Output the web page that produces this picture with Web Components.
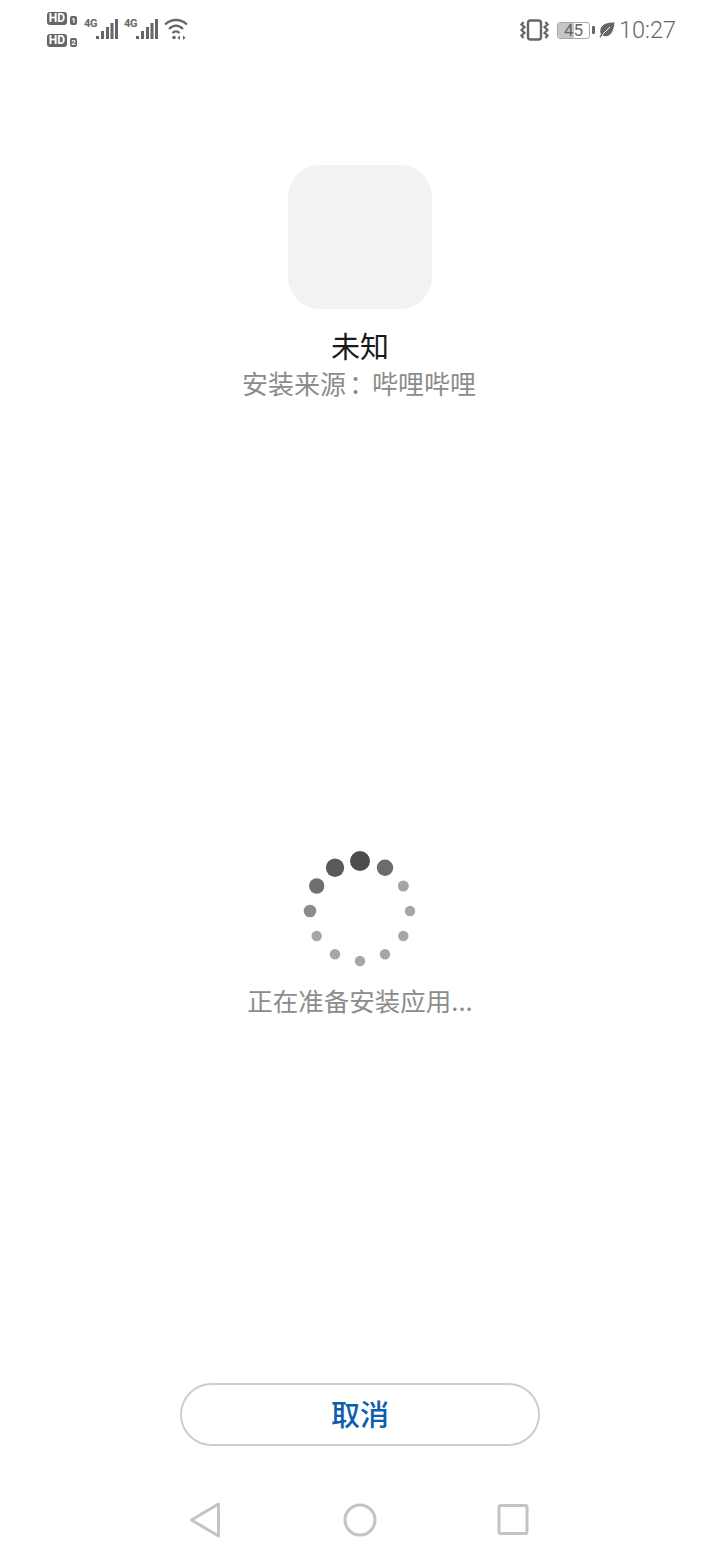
<!DOCTYPE html>
<html lang="zh-CN">
<head>
<meta charset="utf-8">
<title>安装</title>
<style>
    html, body { margin: 0; padding: 0; background: #fff; }
    body { font-family: "Noto Sans CJK SC", Roboto, sans-serif; }
</style>
</head>
<body>
<install-page>
    <status-bar slot="status"></status-bar>
    <app-summary slot="summary" name="未知" label="安装来源" source="哔哩哔哩"></app-summary>
    <install-spinner slot="progress" label="正在准备安装应用..."></install-spinner>
    <cancel-button slot="action">取消</cancel-button>
    <nav-bar slot="nav"></nav-bar>
</install-page>

<script>
class InstallPage extends HTMLElement {
    constructor() {
        super();
        this.attachShadow({ mode: 'open' });
        this.shadowRoot.innerHTML = `
            <style>
                :host { display: flex; flex-direction: column; width: 720px; height: 1560px; background: #fff; overflow: hidden; }
                .summary { margin-top: 105px; }
                .progress { margin-top: 451px; }
                .action { margin-top: auto; }
            </style>
            <slot name="status"></slot>
            <div class="summary"><slot name="summary"></slot></div>
            <div class="progress"><slot name="progress"></slot></div>
            <div class="action"><slot name="action"></slot></div>
            <slot name="nav"></slot>
        `;
    }
}

class StatusBar extends HTMLElement {
    constructor() {
        super();
        this.attachShadow({ mode: 'open' });
        const signal = `
            <svg class="signal" width="23" height="22" viewBox="0 0 23 22" fill="#666">
                <rect x="0" y="18" width="3" height="3"/>
                <rect x="5" y="13" width="3" height="8"/>
                <rect x="10" y="9" width="3" height="12"/>
                <rect x="14.500" y="5" width="3" height="16"/>
                <rect x="19" y="1" width="3" height="20"/>
            </svg>`;
        this.shadowRoot.innerHTML = `
            <style>
                :host { display: flex; justify-content: space-between; align-items: flex-start; height: 60px; padding: 0 45px 0 47px; box-sizing: border-box; color: #666; font-family: Roboto, sans-serif; }
                .left, .right { display: flex; }
                .left { padding-top: 11px; }
                .sims { display: flex; flex-direction: column; gap: 9px; padding-top: 1px; margin-right: 7px; width: 30px; }
                .sim { display: flex; align-items: flex-end; gap: 3px; height: 13px; }
                .hd { width: 20px; height: 13px; border-radius: 3px; background: #666; color: #fff; font: 700 12px/13px Roboto, sans-serif; text-align: center; }
                .num { width: 7px; height: 9px; border-radius: 2px; background: #666; color: #fff; font: 700 8px/9px Roboto, sans-serif; text-align: center; }
                .net { display: flex; width: 40px; height: 32px; }
                .g { font: 700 11px/12px Roboto, sans-serif; margin-top: 7px; width: 13px; flex: none; letter-spacing: -.2px; }
                .signal { margin: 7px 0 0 -1px; flex: none; }
                .wifi { margin: 7px 0 0 -1px; }
                .right { align-items: center; height: 60px; }
                .vib { margin-right: 8px; }
                .batt { position: relative; width: 33px; height: 17px; border: 1.5px solid #aaa; border-radius: 3px; box-sizing: border-box; font: 400 17px/14px Roboto, sans-serif; text-align: center; color: #666; margin-right: 2px; }
                .batt i { position: absolute; inset: 0 50% 0 0; background: #c6c6c6; border-radius: 2px 0 0 2px; }
                .batt span { position: relative; }
                .nub { width: 3px; height: 8px; background: #666; margin-right: 4px; border-radius: 1px; }
                .leaf { margin-right: 4px; }
                .time { font: 300 23.500px/60px Roboto, sans-serif; color: #666; width: 56px; }
            </style>
            <div class="left">
                <div class="sims">
                    <div class="sim"><span class="hd">HD</span><span class="num">1</span></div>
                    <div class="sim"><span class="hd">HD</span><span class="num">2</span></div>
                </div>
                <div class="net"><span class="g">4G</span>${signal}</div>
                <div class="net"><span class="g">4G</span>${signal}</div>
                <svg class="wifi" width="26" height="24" viewBox="0 0 26 24" fill="none" stroke="#666" stroke-width="2.300">
                    <path d="M2 6.500 C8.500 .5 17.500 .5 24 6.500"/>
                    <path d="M6 11 C10.500 6.500 15.500 6.500 20 11"/>
                    <path d="M9.500 15 C11.500 13 14.500 13 16.500 15"/>
                    <circle cx="11" cy="19.500" r="1.800" fill="#666" stroke="none"/>
                    <path d="M17 17.500 L14.500 19.800 L17 22 Z M20 17.500 L22.500 19.800 L20 22 Z" fill="#666" stroke="none"/>
                </svg>
            </div>
            <div class="right">
                <svg class="vib" width="29" height="22" viewBox="0 0 29 22" fill="none" stroke="#666">
                    <rect x="8" y="1.500" width="13" height="19" rx="2.500" stroke-width="2.400"/>
                    <path d="M3.500 3 L1.500 5.500 L4.500 8 L1.500 11 L4.500 14 L1.500 16.500 L3.500 19" stroke-width="2.200"/>
                    <path d="M25.500 3 L27.500 5.500 L24.500 8 L27.500 11 L24.500 14 L27.500 16.500 L25.500 19" stroke-width="2.200"/>
                </svg>
                <div class="batt"><i></i><span>45</span></div>
                <div class="nub"></div>
                <svg class="leaf" width="16" height="16" viewBox="0 0 16 16" fill="#666">
                    <path d="M15.500 .5 C9 .5 2.500 1.500 1.300 8 C1 9.800 1.500 11 2 12 L.5 15 L1.800 15.600 L3.200 13 C5 14.500 8 14.800 10.500 13 C14 10.500 15 5 15.500 .5 Z"/>
                    <path d="M3.500 12.500 L11 5" stroke="#fff" stroke-width="1" fill="none"/>
                </svg>
                <span class="time">10:27</span>
            </div>
        `;
    }
}

class AppSummary extends HTMLElement {
    constructor() {
        super();
        this.attachShadow({ mode: 'open' });
    }

    connectedCallback() {
        this.shadowRoot.innerHTML = `
            <style>
                :host { display: flex; flex-direction: column; align-items: center; font-family: "Noto Sans CJK SC", sans-serif; }
                .icon { width: 144px; height: 144px; border-radius: 32px; background: #f2f2f2; }
                .name { margin-top: 18px; font-size: 29px; line-height: 36px; color: #1a1a1a; }
                .source { margin-top: 3px; padding-right: 2px; font-size: 26px; line-height: 34px; color: #8c8c8c; }
                .colon { display: inline-block; transform: translateX(3px); }
            </style>
            <div class="icon"></div>
            <div class="name">${this.getAttribute('name')}</div>
            <div class="source">${this.getAttribute('label')}<span class="colon">：</span>${this.getAttribute('source')}</div>
        `;
    }
}

class InstallSpinner extends HTMLElement {
    constructor() {
        super();
        this.attachShadow({ mode: 'open' });
    }

    connectedCallback() {
        // clockwise from 12 o'clock: radius and shade fade out along the tail
        const dots = [
            [10, '#4d4d4d'], [8.2, '#6c6c6c'], [5.5, '#a6a6a6'], [5.2, '#a6a6a6'],
            [5.2, '#a6a6a6'], [5.2, '#a6a6a6'], [5.2, '#a6a6a6'], [5.2, '#a6a6a6'],
            [5.2, '#a6a6a6'], [6.3, '#8c8c8c'], [7.7, '#707070'], [9.2, '#5a5a5a']
        ];
        const circles = dots.map(([r, fill], i) => {
            const a = i * Math.PI / 6;
            const x = (60 + 50 * Math.sin(a)).toFixed(2);
            const y = (60 - 50 * Math.cos(a)).toFixed(2);
            return `<circle cx="${x}" cy="${y}" r="${r}" fill="${fill}"/>`;
        }).join('');
        this.shadowRoot.innerHTML = `
            <style>
                :host { display: flex; flex-direction: column; align-items: center; font-family: "Noto Sans CJK SC", sans-serif; }
                svg { display: block; }
                .label { margin-top: 12px; font-size: 25.500px; line-height: 34px; color: #8c8c8c; }
            </style>
            <svg width="120" height="120" viewBox="0 0 120 120">${circles}</svg>
            <div class="label">${this.getAttribute('label')}</div>
        `;
    }
}

class CancelButton extends HTMLElement {
    constructor() {
        super();
        this.attachShadow({ mode: 'open' });
        this.shadowRoot.innerHTML = `
            <style>
                :host { display: block; }
                button { display: block; width: 360px; height: 63px; margin: 0 auto; padding: 0 0 2px; border: 2px solid #cdcdcd; border-radius: 32px; background: #fff; color: #0d5ead; font: 500 29px/1 "Noto Sans CJK SC", sans-serif; }
            </style>
            <button type="button"><slot></slot></button>
        `;
    }
}

class NavBar extends HTMLElement {
    constructor() {
        super();
        this.attachShadow({ mode: 'open' });
        this.shadowRoot.innerHTML = `
            <style>
                :host { display: flex; justify-content: center; gap: 111px; height: 114px; padding-top: 56px; box-sizing: border-box; }
                svg { display: block; }
            </style>
            <svg width="50" height="36" viewBox="0 0 50 36" fill="none" stroke="#c4c4c4" stroke-width="3" stroke-linejoin="round">
                <path d="M37.500 2 L37.500 34 L10.500 18 Z"/>
            </svg>
            <svg width="36" height="36" viewBox="0 0 36 36" fill="none" stroke="#c4c4c4" stroke-width="3">
                <circle cx="18" cy="18" r="15"/>
            </svg>
            <svg width="50" height="36" viewBox="0 0 50 36" fill="none" stroke="#c4c4c4" stroke-width="3" stroke-linejoin="round">
                <rect x="10" y="3.500" width="28" height="28" rx="1.500"/>
            </svg>
        `;
    }
}

customElements.define('install-page', InstallPage);
customElements.define('status-bar', StatusBar);
customElements.define('app-summary', AppSummary);
customElements.define('install-spinner', InstallSpinner);
customElements.define('cancel-button', CancelButton);
customElements.define('nav-bar', NavBar);
</script>
</body>
</html>
